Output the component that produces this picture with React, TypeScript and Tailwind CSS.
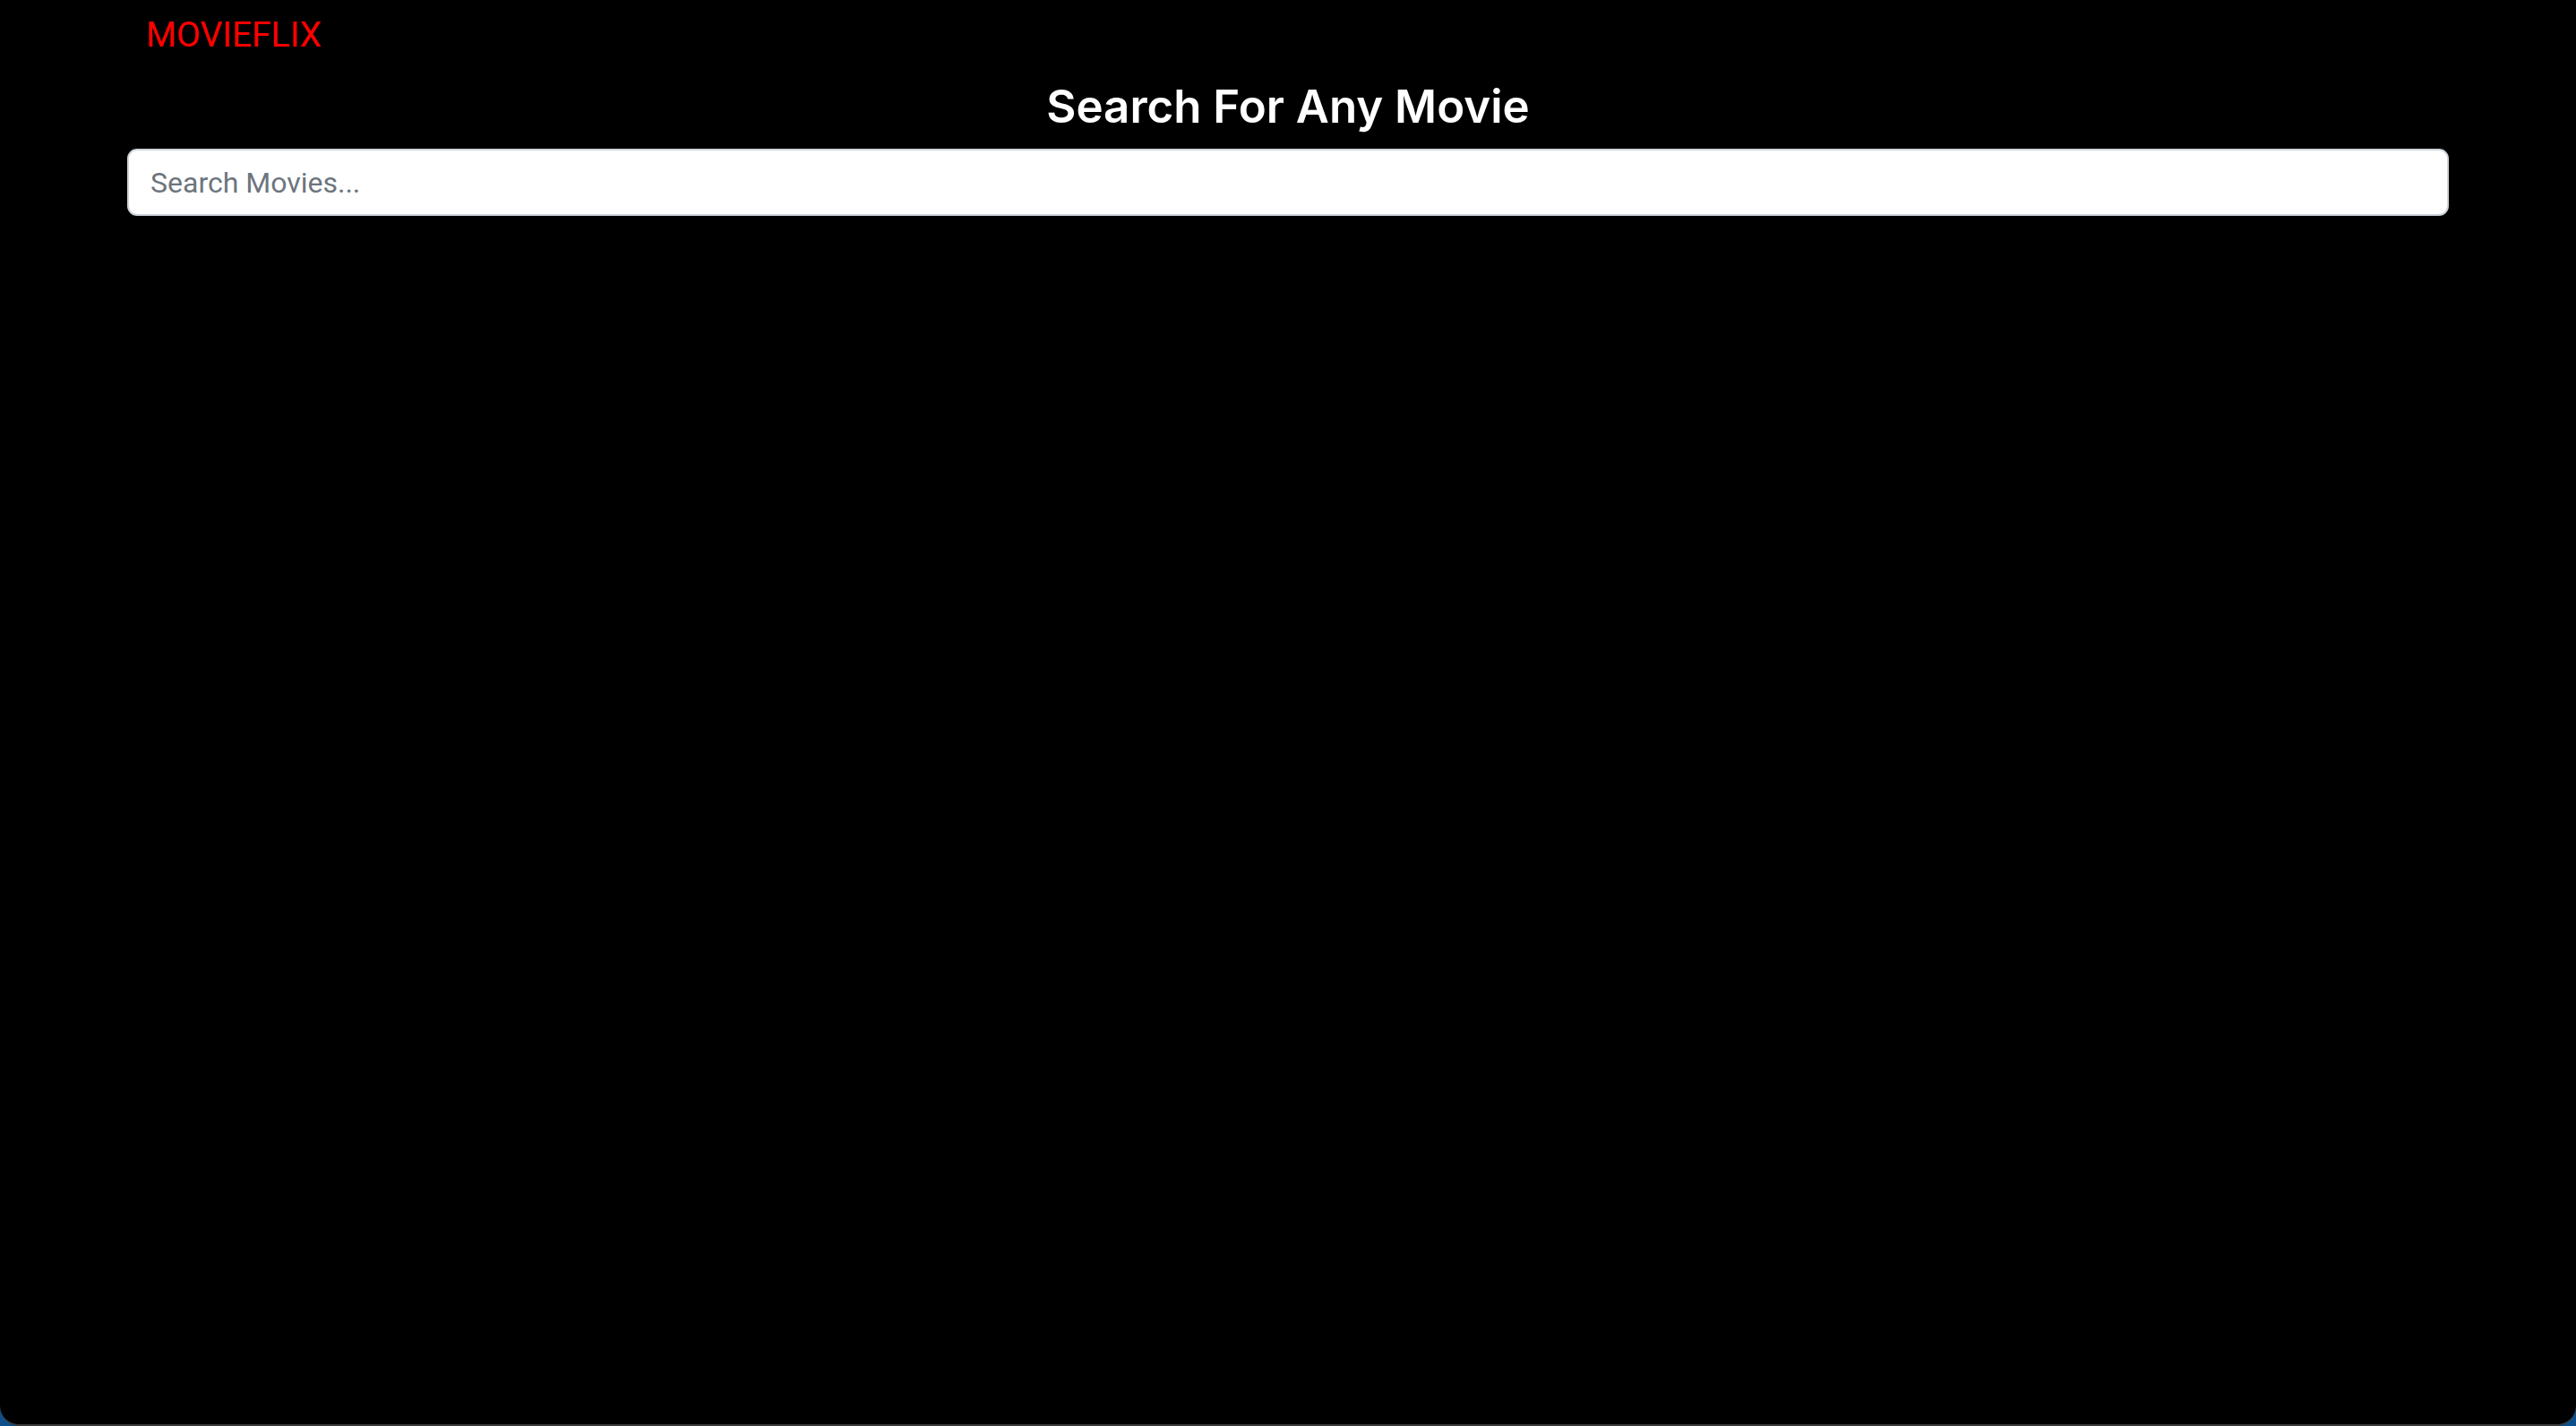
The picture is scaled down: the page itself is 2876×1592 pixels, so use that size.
export default function App() {
  return (
    <div className="h-[1592px] w-full bg-[#0d4f8a]">
      <div className="h-full w-full bg-black rounded-b-[22px] border-b-2 border-[#3a3a3a] font-['Roboto',sans-serif]">
        <nav className="pl-[163px] pt-[19px]">
          <a href="#" className="text-[39px] leading-[40px] text-[#ff0000]">
            MOVIEFLIX
          </a>
        </nav>

        <div className="mx-auto w-[2592px]">
          <h1 className="mt-[30px] text-center text-[51px] leading-[60px] font-semibold text-white font-['Inter',sans-serif]">
            Search For Any Movie
          </h1>
          <input
            type="text"
            placeholder="Search Movies..."
            className="mt-[17px] block h-[75px] w-full rounded-[11px] border-2 border-[#ced4da] bg-white px-[24px] text-[32px] text-[#212529] placeholder:text-[#6c757d] outline-none"
          />
        </div>
      </div>
    </div>
  );
}
